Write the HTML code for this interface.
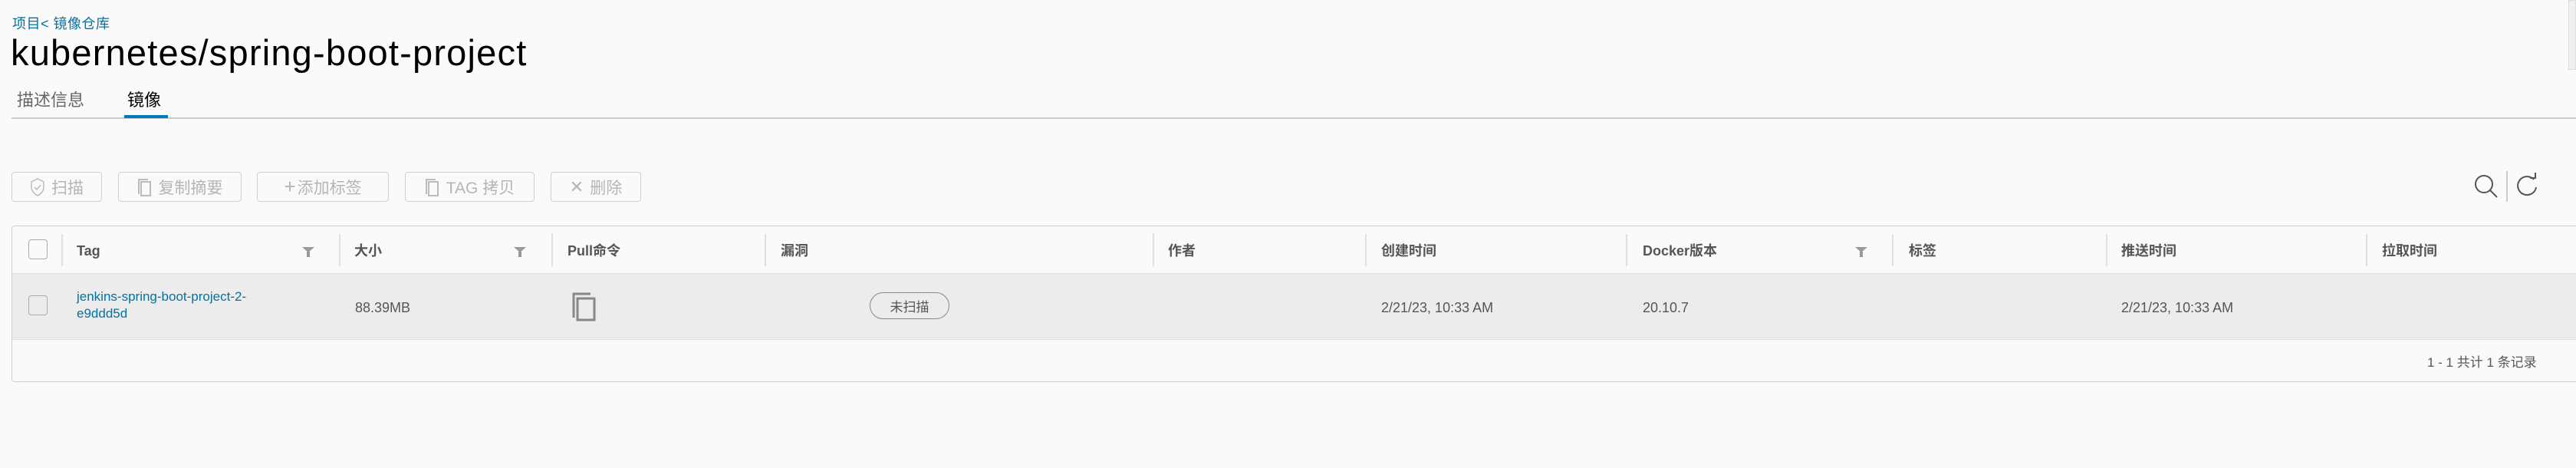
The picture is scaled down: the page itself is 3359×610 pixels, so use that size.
<!DOCTYPE html>
<html><head><meta charset="utf-8">
<style>
*{margin:0;padding:0;box-sizing:border-box}
body{width:3359px;height:610px;background:#fafafa;font-family:"Liberation Sans","Noto Sans CJK SC",sans-serif;position:relative;overflow:hidden;color:#565656}
.a{position:absolute;white-space:nowrap}
.btn{position:absolute;top:224px;height:39px;border:1.5px solid #d0d0d0;border-radius:4px;color:#b5b5b5;font-size:21px;display:flex;align-items:center;justify-content:center;gap:8px}
.sep{position:absolute;top:305px;width:2px;height:42px;background:#e0e0e0}
.h{position:absolute;top:314px;height:26px;line-height:26px;font-size:18px;font-weight:bold;color:#555}
.f{position:absolute;top:322px;width:0;height:0;border-left:8px solid transparent;border-right:8px solid transparent;border-top:7px solid #999}
.f:after{content:"";position:absolute;left:-2px;top:-1px;width:4px;height:7px;background:#999}
.cb{position:absolute;left:37px;width:25px;height:26px;border:1.5px solid #aaa;border-radius:4px;background:#fafafa}
.d{position:absolute;top:388px;height:26px;line-height:26px;font-size:18px;color:#565656}
</style></head><body>
<div class="a" style="left:3349px;top:0;width:10px;height:91px;border:1px solid #ddd;background:#f0f0f0"></div>
<div class="a" style="left:16px;top:17px;font-size:18px;color:#0072a3;letter-spacing:0.5px">项目&lt; 镜像仓库</div>
<div class="a" style="left:14px;top:41px;font-size:47px;color:#000;letter-spacing:1.2px">kubernetes/spring-boot-project</div>
<div class="a" style="left:22px;top:113px;font-size:22px;color:#666">描述信息</div>
<div class="a" style="left:166px;top:113px;font-size:22px;color:#000">镜像</div>
<div class="a" style="left:15px;top:153px;width:3344px;height:2px;background:#ccc"></div>
<div class="a" style="left:162px;top:150px;width:57px;height:4px;background:#0079b8"></div>

<div class="btn" style="left:15px;width:118px"><svg width="20" height="24" viewBox="0 0 20 24"><path d="M10 1 L18 5 V12 C18 17 14 21 10 23 C6 21 2 17 2 12 V5 Z" fill="none" stroke="#bbb" stroke-width="1.5"/><path d="M6 12 L9 15 L14 9" fill="none" stroke="#bbb" stroke-width="1.5"/></svg>扫描</div>
<div class="btn" style="left:154px;width:161px"><svg width="20" height="26" viewBox="0 0 20 26"><path d="M2 22 V3 H14" fill="none" stroke="#bbb" stroke-width="2"/><rect x="5" y="6" width="12" height="18" fill="none" stroke="#bbb" stroke-width="2"/></svg>复制摘要</div>
<div class="btn" style="left:335px;width:172px;gap:2px"><span style="font-size:26px">+</span>添加标签</div>
<div class="btn" style="left:528px;width:169px"><svg width="20" height="26" viewBox="0 0 20 26"><path d="M2 22 V3 H14" fill="none" stroke="#bbb" stroke-width="2"/><rect x="5" y="6" width="12" height="18" fill="none" stroke="#bbb" stroke-width="2"/></svg>TAG 拷贝</div>
<div class="btn" style="left:718px;width:118px"><span style="font-size:22px">✕</span>删除</div>

<svg class="a" style="left:3220px;top:222px" width="100" height="42" viewBox="0 0 100 42"><circle cx="19" cy="18" r="11" fill="none" stroke="#555" stroke-width="2"/><path d="M27 26 L36 35" stroke="#555" stroke-width="2"/><rect x="48" y="1" width="2" height="40" fill="#ccc"/><path d="M84 12 A12 12 0 1 0 87 22" fill="none" stroke="#555" stroke-width="2"/><path d="M79 10 H86 V3" fill="none" stroke="#555" stroke-width="2"/></svg>

<div class="a" style="left:15px;top:294px;width:3400px;height:204px;border:1.5px solid #ccc;border-radius:4px;background:#fafafa"></div>
<div class="a" style="left:16px;top:356px;width:3400px;height:84px;background:#ececec;border-top:1.5px solid #ddd"></div>
<div class="a" style="left:16px;top:440px;width:3400px;height:3px;border-top:1px solid #ddd;border-bottom:1px solid #ddd"></div>
<div class="cb" style="top:312px"></div>
<div class="cb" style="top:385px;background:#ececec"></div>
<div class="sep" style="left:80px"></div><div class="sep" style="left:442px"></div><div class="sep" style="left:719px"></div><div class="sep" style="left:997px"></div><div class="sep" style="left:1503px"></div><div class="sep" style="left:1780px"></div><div class="sep" style="left:2120px"></div><div class="sep" style="left:2467px"></div><div class="sep" style="left:2746px"></div><div class="sep" style="left:3085px"></div>
<div class="h" style="left:100px">Tag</div><div class="f" style="left:394px"></div>
<div class="h" style="left:462px">大小</div><div class="f" style="left:670px"></div>
<div class="h" style="left:740px">Pull命令</div>
<div class="h" style="left:1018px">漏洞</div>
<div class="h" style="left:1523px">作者</div>
<div class="h" style="left:1801px">创建时间</div>
<div class="h" style="left:2142px">Docker版本</div><div class="f" style="left:2419px"></div>
<div class="h" style="left:2489px">标签</div>
<div class="h" style="left:2766px">推送时间</div>
<div class="h" style="left:3106px">拉取时间</div>

<div class="a" style="left:100px;top:376px;font-size:17px;line-height:22px;color:#0072a3">jenkins-spring-boot-project-2-<br>e9ddd5d</div>
<div class="d" style="left:463px">88.39MB</div>
<svg class="a" style="left:745px;top:380px" width="36" height="40" viewBox="0 0 36 40"><path d="M3 34 V3 H25" fill="none" stroke="#888" stroke-width="3"/><rect x="8" y="9" width="22" height="28" fill="none" stroke="#888" stroke-width="3"/></svg>
<div class="a" style="left:1134px;top:381px;width:104px;height:35px;border:1.5px solid #888;border-radius:18px;font-size:17px;color:#555;display:flex;align-items:center;justify-content:center">未扫描</div>
<div class="d" style="left:1801px">2/21/23, 10:33 AM</div>
<div class="d" style="left:2142px">20.10.7</div>
<div class="d" style="left:2766px">2/21/23, 10:33 AM</div>
<div class="a" style="left:3165px;top:458px;font-size:17px;color:#565656">1 - 1 共计 1 条记录</div>
</body></html>
